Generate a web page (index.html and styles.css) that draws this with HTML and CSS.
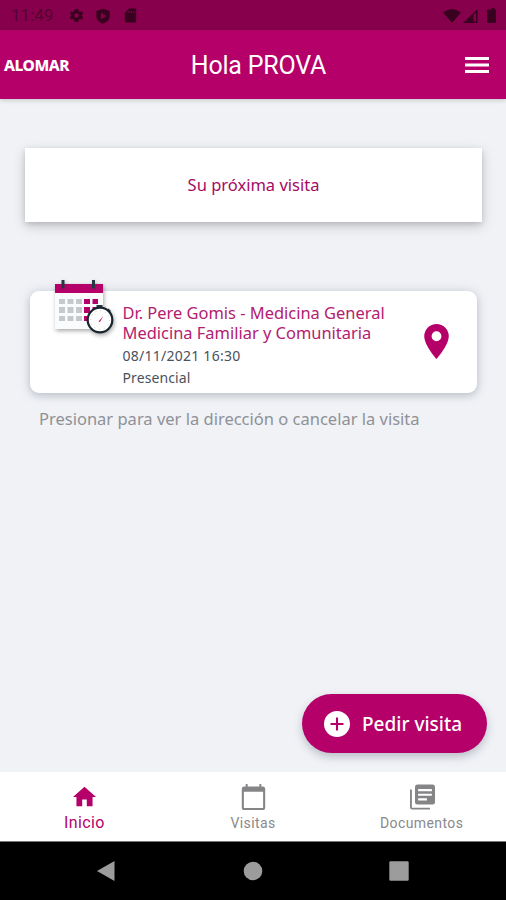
FILE: index.html
```html
<!DOCTYPE html>
<html lang="es">
<head>
<meta charset="utf-8">
<meta name="viewport" content="width=device-width">
<title>Alomar</title>
<link rel="stylesheet" href="styles.css">
</head>
<body>
<div class="app">
  <div class="status">
    <span class="clock">11:49</span>
    <svg class="s-icon gear" viewBox="0 0 24 24"><path fill-rule="evenodd" d="M19.4 13a7.500 7.500 0 0 0 0-2l2.100-1.600-2-3.500-2.500 1a7.600 7.600 0 0 0-1.700-1L15 3.200h-6L8.700 5.900a7.600 7.600 0 0 0-1.700 1l-2.500-1-2 3.500L4.600 11a7.500 7.500 0 0 0 0 2l-2.100 1.600 2 3.500 2.500-1a7.600 7.600 0 0 0 1.700 1L9 20.800h6l.3-2.700a7.600 7.600 0 0 0 1.700-1l2.500 1 2-3.500zM12 8.800a3.200 3.200 0 1 1 0 6.400 3.200 3.200 0 0 1 0-6.400z"/></svg>
    <svg class="s-icon shield" viewBox="0 0 24 24"><path fill-rule="evenodd" d="M12 1 2 4.500V12c0 5.500 4 9.500 10 11.500 6-2 10-6 10-11.500V4.500zM9 7l8 5-8 5z"/></svg>
    <svg class="s-icon sd" viewBox="0 0 24 24"><path fill-rule="evenodd" d="M20 2H10L4 8v12a2 2 0 0 0 2 2h12a2 2 0 0 0 2-2zM9 5.500h1.500v3H9zM12.500 5.500H14v3h-1.500zM16 5.500h1.500v3H16z"/></svg>
    <svg class="signals" viewBox="0 0 54 16"><path d="M0 4.500Q9 -2.500 18 4.500L9 15z"/><path fill-rule="evenodd" d="M20 15 34.500 1v14zM30.500 7v6.500h2.500V4.500z"/><path d="M45.500 1.500h3V0h3v1.500h1.500V15h-9V1.500z"/></svg>
  </div>
  <header class="header">
    <span class="brand">ALOMAR</span>
    <h1>Hola PROVA</h1>
    <svg class="menu" viewBox="0 0 24 16"><path d="M0 0h24v3H0zM0 6.500h24v3H0zM0 13h24v3H0z"/></svg>
  </header>
  <main>
    <section class="next"><span>Su próxima visita</span></section>
    <section class="visit">
      <svg class="calendar" viewBox="0 0 62 60">
        <path class="paper" d="M2 4h48v45H2z"/>
        <path class="accent" d="M2 4h48v9H2zM31 19h6v5h-6zM39.500 19h5.500v5h-5.500zM31 27h6v6h-6zM39.500 27h5.500v6h-5.500zM31 36h6v5h-6z"/>
        <path class="cells" d="M6 19h6v5H6zM14.500 19h6v5h-6zM23 19h6v5h-6zM6 27h6v6H6zM14.500 27h6v6h-6zM23 27h6v6h-6zM6 36h6v5H6zM14.500 36h6v5h-6zM23 36h6v5h-6z"/>
        <path class="rings" d="M8.500 0h3v8.500h-3zM39 0h3v8.500h-3zM43.500 25h6v3h-6zM55.500 28.500l2.500 2.500-1.500 1.500-2.500-2.500z"/>
        <circle class="watch" cx="47" cy="40" r="12.300"/>
        <circle class="ticks" cx="47" cy="40" r="9.300"/>
        <path class="hand" d="m45.500 41.500 4.700-5.300-3.200 5.800z"/>
      </svg>
      <div class="details">
        <h2 class="doctor">Dr. Pere Gomis - Medicina General</h2>
        <h2 class="specialty">Medicina Familiar y Comunitaria</h2>
        <p class="date">08/11/2021 16:30</p>
        <p class="kind">Presencial</p>
      </div>
      <svg class="pin" viewBox="5 2 14 20"><path fill-rule="evenodd" d="M12 2a7 7 0 0 0-7 7c0 5.250 7 13 7 13s7-7.750 7-13a7 7 0 0 0-7-7zm0 4.200a2.800 2.800 0 1 1 0 5.600 2.800 2.800 0 0 1 0-5.600z"/></svg>
    </section>
    <p class="hint">Presionar para ver la dirección o cancelar la visita</p>
    <button class="book"><svg viewBox="2 2 20 20"><path fill-rule="evenodd" d="M12 2a10 10 0 1 0 0 20 10 10 0 0 0 0-20zm5 10.800h-4.200V17h-1.600v-4.200H7v-1.600h4.200V7h1.600v4.200H17z"/></svg><span>Pedir visita</span></button>
  </main>
  <nav class="tabs">
    <a class="tab active"><svg class="home" viewBox="2 3 20 17"><path d="M10 20v-6h4v6h5v-8h3L12 3 2 12h3v8z"/></svg><span class="t-home">Inicio</span></a>
    <a class="tab"><svg class="cal" viewBox="3 1 18 20"><path fill-rule="evenodd" d="M19 3h-1V1h-1.500v2h-9V1H6v2H5a2 2 0 0 0-2 2v14a2 2 0 0 0 2 2h14a2 2 0 0 0 2-2V5a2 2 0 0 0-2-2zm.4 16.400H4.600V7h14.800z"/></svg><span class="t-visits">Visitas</span></a>
    <a class="tab"><svg class="docs" viewBox="2 2 20 20"><path fill-rule="evenodd" d="M3.500 6H2v14a2 2 0 0 0 2 2h14v-1.500H3.500zM20 2H8a2 2 0 0 0-2 2v12a2 2 0 0 0 2 2h12a2 2 0 0 0 2-2V4a2 2 0 0 0-2-2zm-.5 9h-11V9.300h11zm-4 3.700h-7V13h7zm4-7.400h-11V5.600h11z"/></svg><span class="t-docs">Documentos</span></a>
  </nav>
  <div class="system">
    <svg viewBox="0 0 20 22"><path d="M1 11 18.500 1v20z"/></svg>
    <svg viewBox="0 0 20 22"><circle cx="10" cy="11" r="9.300"/></svg>
    <svg viewBox="0 0 20 22"><rect x=".3" y="1.300" width="19.400" height="19.400" rx="1.300"/></svg>
  </div>
</div>
</body>
</html>
```
FILE: styles.css
```css
* { box-sizing: border-box; }
body, h1, h2, p { margin: 0; font-weight: 400; }
body { font-family: "Noto Sans", sans-serif; background: #f0f2f6; }
svg { display: block; flex: none; }
span { white-space: nowrap; }
.app { height: 900px; display: flex; flex-direction: column; }
.status { height: 30px; background: #87004c; display: flex; align-items: center; padding: 1px 9px 0 11px; color: #510331; fill: #39001f; }
.clock { font: 400 16.500px/20px Roboto, sans-serif; width: 57px; letter-spacing: .3px; }
.s-icon { width: 17px; height: 17px; margin-right: 10px; }
.shield { width: 16px; height: 16px; margin-right: 11px; }
.signals { width: 54px; height: 16px; margin-left: auto; }
.header { height: 69px; background: #b5006a; color: #fff; display: grid; grid-template-columns: 100px 1fr 100px; align-items: center; padding: 0 17px 0 4px; box-shadow: 0 1px 5px #0003; z-index: 1; }
.brand { font: 800 15.500px/20px "Noto Sans", sans-serif; letter-spacing: -.45px; }
.header h1 { font: 400 25px/30px Roboto, sans-serif; letter-spacing: -.2px; text-align: center; padding: 2px 0 0 24px; }
.menu { width: 24px; height: 16px; fill: #fff; justify-self: end; }
main { flex: 1; display: flex; flex-direction: column; position: relative; }
.next { margin: 49px 24px 0 25px; padding-bottom: 2px; height: 74px; background: #fff; color: #a50a63; font-size: 16.500px; display: flex; align-items: center; justify-content: center; box-shadow: 0 4px 12px #0000002e, 0 2px 5px #0000001f; }
.visit { margin: 69px 29px 0 30px; height: 102px; background: #fff; border-radius: 9px; display: flex; box-shadow: 0 1px 12px #7079884d, 0 3px 6px #70798833; position: relative; }
.calendar { position: absolute; left: 23px; top: -11px; width: 62px; height: 60px; filter: drop-shadow(1px 2px 2px #0005); }
.paper { fill: #fafbfd; }
.accent { fill: #b5006a; }
.cells { fill: #c5c9cc; }
.rings { fill: #263540; }
.watch { fill: #fff; stroke: #17252c; stroke-width: 2.200; }
.ticks { fill: none; stroke: #a9adaf; stroke-width: .8; stroke-dasharray: .8 4.070; }
.hand { fill: #c01657; }
.details { margin: 12px 0 0 92.500px; width: 301.500px; }
.details h2 { font-size: 16.450px; line-height: 20px; color: #b32070; white-space: nowrap; }
.details p { font-size: 14px; line-height: 22px; color: #4a515b; }
.details .date { margin-top: 2px; letter-spacing: .25px; }
.details .kind { letter-spacing: .1px; }
.pin { width: 25px; height: 35px; fill: #b5006a; margin-top: 33px; }
.hint { font-size: 16.500px; line-height: 22px; color: #8f9196; margin: 15px 0 0 39px; white-space: nowrap; }
.book { align-self: flex-end; margin: auto 19px 19px 0; width: 185px; height: 59px; border: 0; border-radius: 30px; background: #b5006a; color: #fff; display: flex; align-items: center; padding: 0 0 0 22px; gap: 12px; font: 500 19px/24px "Noto Sans", sans-serif; box-shadow: 0 4px 8px #59607059; }
.book svg { width: 26px; height: 26px; fill: #fff; }
.tabs { height: 70px; background: #fff; display: grid; grid-template-columns: repeat(3, 1fr); border-bottom: 1px solid #777; }
.tab { display: flex; flex-direction: column; align-items: center; font: 400 14px/18px Roboto, sans-serif; letter-spacing: .4px; color: #89898b; fill: #858587; }
.tab svg { margin-top: 12px; width: 25px; height: 26px; }
.tab .cal { margin-left: 1px; }
.tab .docs { margin-left: 2px; }
.tab .home { width: 23px; height: 21px; margin-top: 14px; margin-left: 1px; }
.tab span { margin-top: 4px; }
.tab .t-home { font-size: 16px; margin-top: 7px; }
.active { color: #b5006a; fill: #b5006a; }
.system { height: 58px; background: #000; display: flex; align-items: center; justify-content: space-between; padding: 0 97px 0 96px; fill: #9c9c9c; }
.system svg { width: 20px; height: 22px; }
```
